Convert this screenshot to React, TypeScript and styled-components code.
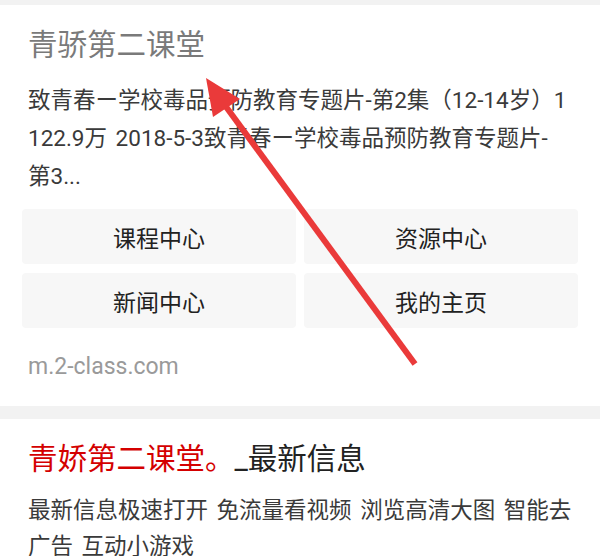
import React from 'react';
import styled, { createGlobalStyle } from 'styled-components';

const GlobalStyle = createGlobalStyle`
	html, body {
		margin: 0;
		padding: 0;
		background: #f2f2f2;
	}
	body {
		font-family: Roboto, "Noto Sans CJK SC", "Noto Sans", sans-serif;
		-webkit-font-smoothing: antialiased;
	}
`;

const Page = styled.div`
	position: relative;
	width: 600px;
	height: 556px;
	overflow: hidden;
	background: #f2f2f2;
	padding-top: 5px;
	box-sizing: border-box;
	display: flex;
	flex-direction: column;
	gap: 13px;
`;

const Card = styled.div<{ $top: number }>`
	background: #fff;
	padding: ${(p) => p.$top}px 22px 24px;
`;

const Title = styled.h2<{ $gray?: boolean }>`
	margin: 0 6px;
	font-size: 29.5px;
	font-weight: normal;
	line-height: 40px;
	color: ${(p) => (p.$gray ? '#7a7a7a' : '#222')};
	white-space: nowrap;
`;

const Red = styled.span`
	color: #d40000;
`;

const Summary = styled.p<{ $top: number; $lh: number }>`
	margin: ${(p) => p.$top}px 6px 0;
	font-size: 22.5px;
	line-height: ${(p) => p.$lh}px;
	word-spacing: 3px;
	color: #3a3a3a;
	word-break: break-all;
`;

const Keep = styled.span`
	white-space: nowrap;
`;

const Grid = styled.div`
	display: grid;
	grid-template-columns: 1fr 1fr;
	gap: 9px 8px;
	margin-top: 14px;
`;

const Button = styled.div`
	height: 55px;
	background: #f7f7f7;
	border-radius: 4px;
	display: flex;
	align-items: center;
	justify-content: center;
	font-size: 23px;
	color: #222;
`;

const Url = styled.div`
	margin: 24px 6px 0;
	font-size: 23px;
	line-height: 30px;
	color: #9a9a9a;
`;

const Arrow = styled.svg`
	position: absolute;
	left: 0;
	top: 0;
	pointer-events: none;
`;

const buttons = ['课程中心', '资源中心', '新闻中心', '我的主页'];

const App: React.FC = () => {
	return (
		<Page>
			<GlobalStyle />
			<Card $top={20}>
				<Title $gray>青骄第二课堂</Title>
				<Summary $top={16} $lh={38}>
					致青春ー学校毒品预防教育专题片-第2集（12-14岁）1 122.9万 2018-5-3致青春ー学校毒品预防教育专题片-
					<Keep>第3...</Keep>
				</Summary>
				<Grid>
					{buttons.map((b) => (
						<Button key={b}>{b}</Button>
					))}
				</Grid>
				<Url>m.2-class.com</Url>
			</Card>
			<Card $top={20}>
				<Title>
					<Red>青娇第二课堂。</Red>_最新信息
				</Title>
				<Summary $top={13} $lh={36}>
					最新信息极速打开 免流量看视频 浏览高清大图 智能去广告 互动小游戏
				</Summary>
			</Card>
			<Arrow width="600" height="556" viewBox="0 0 600 556">
				<line x1="415" y1="364" x2="224" y2="104" stroke="#ea3a3a" strokeWidth="6" />
				<polygon points="206,78 240,99 213,117" fill="#ea3a3a" />
			</Arrow>
		</Page>
	);
};

export default App;
